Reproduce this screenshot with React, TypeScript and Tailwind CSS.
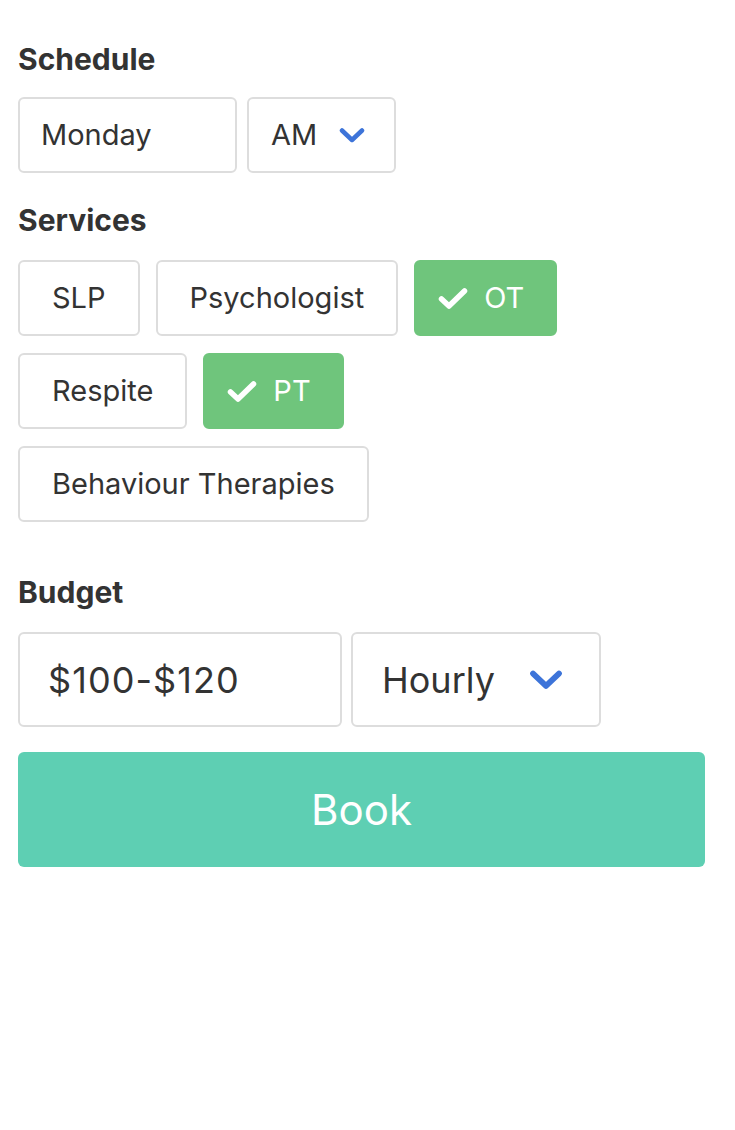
import React, { useState } from 'react';

const Chevron = ({ className }: { className?: string }) => (
  <svg viewBox="0 0 26 17" className={className} fill="none">
    <path d="M3 3.5 L13 13 L23 3.5" stroke="#3d74d9" strokeWidth="4.5" strokeLinecap="round" strokeLinejoin="round" />
  </svg>
);

const CheckMark = () => (
  <svg viewBox="0 0 30 23" className="w-[30px] h-[23px] shrink-0" fill="none">
    <path d="M3.5 12 L11 19 L26.5 4" stroke="#ffffff" strokeWidth="5.5" strokeLinecap="round" strokeLinejoin="round" />
  </svg>
);

const services = ['SLP', 'Psychologist', 'OT', 'Respite', 'PT', 'Behaviour Therapies'];

export default function App() {
  const [selected, setSelected] = useState<string[]>(['OT', 'PT']);

  const toggle = (s: string) =>
    setSelected((cur) => (cur.includes(s) ? cur.filter((x) => x !== s) : [...cur, s]));

  return (
    <div className="min-h-[1130px] bg-white px-[18px] pt-[41px] text-[#333333] font-['Inter','Liberation_Sans',sans-serif]">
      {/* Schedule */}
      <h2 className="text-[30px] leading-[36px] font-bold text-[#333]">Schedule</h2>
      <div className="mt-[20px] flex gap-[10px]">
        <div className="w-[219px] h-[76px] rounded-[6px] border-2 border-[#dddddd] flex items-center pl-[21px] text-[29px]">
          Monday
        </div>
        <div className="w-[149px] h-[76px] rounded-[6px] border-2 border-[#dddddd] flex items-center pl-[22px] text-[29px]">
          AM
          <Chevron className="ml-auto mr-[29px] w-[26px] h-[17px]" />
        </div>
      </div>

      {/* Services */}
      <h2 className="mt-[29px] text-[30px] leading-[36px] font-bold text-[#333]">Services</h2>
      <div className="mt-[22px] flex flex-wrap gap-x-[16px] gap-y-[17px] w-[560px]">
        {services.map((s) => {
          const on = selected.includes(s);
          return (
            <button
              key={s}
              onClick={() => toggle(s)}
              className={`h-[76px] rounded-[6px] border-2 flex items-center gap-[16px] text-[29px] ${
                on
                  ? 'bg-[#6fc57c] border-[#6fc57c] text-white pl-[22px] pr-[31px]'
                  : 'bg-white border-[#dddddd] text-[#333] px-[32px]'
              }`}
            >
              {on && <CheckMark />}
              {s}
            </button>
          );
        })}
      </div>

      {/* Budget */}
      <h2 className="mt-[52px] text-[30px] leading-[36px] font-bold text-[#333]">Budget</h2>
      <div className="mt-[22px] flex gap-[9px]">
        <div className="w-[324px] h-[95px] rounded-[6px] border-2 border-[#dddddd] flex items-center pl-[28px] text-[36px] tracking-[0.03em]">
          $100-$120
        </div>
        <div className="w-[250px] h-[95px] rounded-[6px] border-2 border-[#dddddd] flex items-center pl-[29px] text-[36px]">
          Hourly
          <Chevron className="ml-auto mr-[35px] w-[36px] h-[22px]" />
        </div>
      </div>

      <button className="mt-[25px] w-[687px] h-[115px] rounded-[6px] bg-[#5ecfb3] text-white text-[42px] flex items-center justify-center">
        Book
      </button>
    </div>
  );
}
